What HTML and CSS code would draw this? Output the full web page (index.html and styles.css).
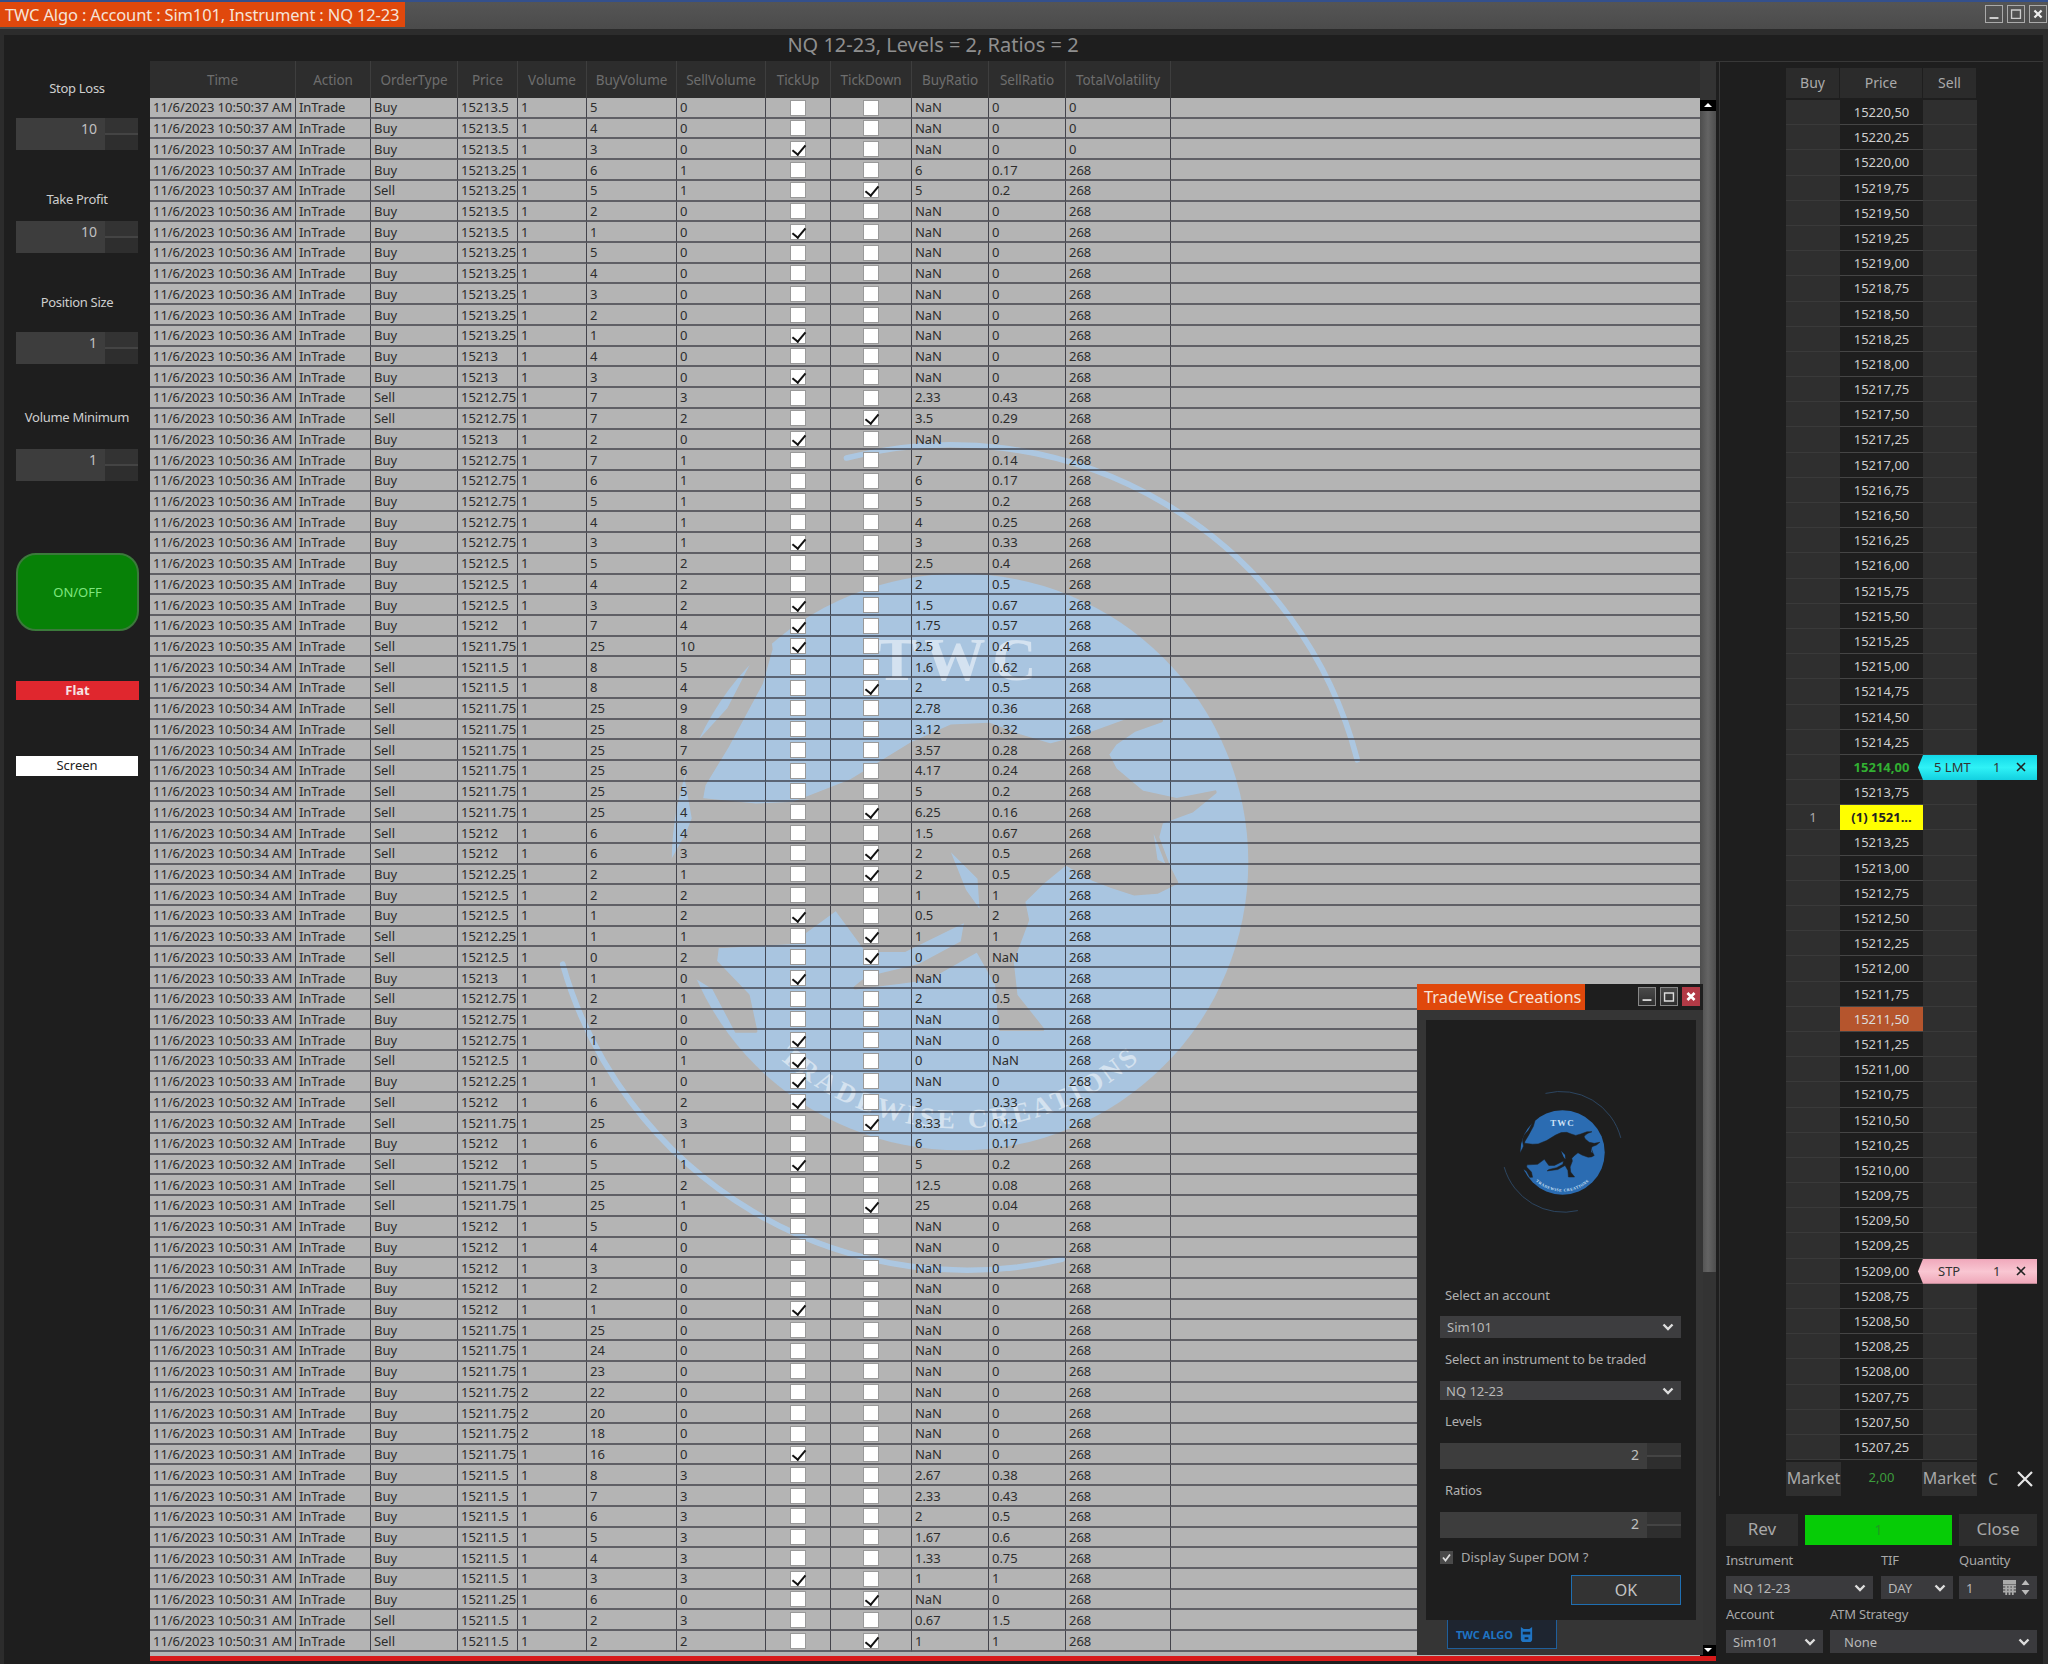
FILE: index.html
```html
<!DOCTYPE html>
<html lang="en">
<head>
<meta charset="utf-8">
<title>TWC Algo</title>
<link rel="stylesheet" href="styles.css">
</head>
<body>
<svg class="defs" width="0" height="0" aria-hidden="true">
  <defs>
    <mask id="bullcut" maskUnits="userSpaceOnUse" x="-200" y="-200" width="400" height="400">
      <rect x="-200" y="-200" width="400" height="400" fill="#fff"/>
      <path fill="#000" stroke="#000" stroke-width="1.500" stroke-linejoin="round" d="M-105.200 -114.500L-91.700 -109.500L-84.100 -100.400L-83.300 -93.800L-87.500 -78.900L-102.700 -50.700L-112.800 -34.100L-114 -27.500L-90 -25L-73.200 -25.800L-47.900 -35.800L-20.900 -52.300L-4 -59.800L12.800 -60.600L26.300 -55.600L39.800 -51.500L55 -55.600L73.500 -62.300L88.700 -62.300L76.900 -58.100L68.400 -52.300L65 -47.400L68.400 -40.700L80.200 -30.800L95.400 -27.500L112.300 -30.800L102.200 -22.500L88.700 -17.500L87 -10.900L92 2.400L95.400 9L87 13.200L76.900 14L66.800 10.700L58.300 7.400L46.500 .7L36.400 9L28 17.300L29.700 25.600L22.900 43.800L24.600 58.800L36.400 73.700L17.900 73.700L16.200 53.800L7.700 38.900L-14.200 51.300L-46.200 55.400L-41.200 51.300L-17.600 45.500L1 35.500L2.700 25.600L-24.300 38.900L-41.200 38.900L-54.600 20.600L-74.900 35.500L-106.900 37.200L-107.800 43.800L-93.400 58.800L-90 74.500L-98.500 74.500L-108.600 55.400L-122 47.200L-132 52L-125 37L-130.500 20.600L-132 9L-120 -12.500L-117.400 -19.200L-120.400 -35.800L-117 -50.700L-101.900 -67.300L-91.700 -87.100L-92.600 -98.800Z"/>
      <path fill="#fff" d="M-4 -4.300L7.700 7.400L8.600 20.600L2.700 12.300ZM85.300 -12.500L90.400 .7L87 -1Z"/>
    </mask>
    <symbol id="twc" viewBox="-200 -200 400 400">
      <circle class="wm-disc" r="127" mask="url(#bullcut)"/>
      <path class="wm-arc" d="M-50 -178A185 185 0 0 1 175 -45"/>
      <path class="wm-arc" d="M-175 45A185 185 0 0 0 45 175"/>
      <text class="wm-title" x="0" y="-80" text-anchor="middle">TWC</text>
      <path id="wmcurve" fill="none" d="M-88 78A118 118 0 0 0 88 78"/>
      <text class="wm-sub"><textPath href="#wmcurve" startOffset="50%" text-anchor="middle">TRADEWISE CREATIONS</textPath></text>
    </symbol>
  </defs>
</svg>
<div class="app">
  <header class="titlebar">
    <div class="title-tag">TWC Algo : Account : Sim101, Instrument : NQ 12-23</div>
    <div class="winbtns">
      <span class="winbtn"><svg viewBox="0 0 18 18"><path d="M4 13.500H14" stroke="#ddd" stroke-width="2"/></svg></span>
      <span class="winbtn"><svg viewBox="0 0 18 18"><path d="M4 4.500H14V14H4Z" fill="none" stroke="#ccc" stroke-width="1.500"/></svg></span>
      <span class="winbtn"><svg viewBox="0 0 18 18"><path d="M5 5L13 13M13 5L5 13" stroke="#eee" stroke-width="2.500"/></svg></span>
    </div>
  </header>
  <main class="main">
    <aside class="side">
      <div class="side-label">Stop Loss</div>
      <div class="spin spin-side"><span class="spin-val">10</span><span class="spin-btns"></span></div>
      <div class="side-label side-label-b">Take Profit</div>
      <div class="spin spin-side spin-near"><span class="spin-val">10</span><span class="spin-btns"></span></div>
      <div class="side-label side-label-b">Position Size</div>
      <div class="spin spin-side"><span class="spin-val">1</span><span class="spin-btns"></span></div>
      <div class="side-label side-label-c">Volume Minimum</div>
      <div class="spin spin-side spin-far"><span class="spin-val">1</span><span class="spin-btns"></span></div>
      <div class="onoff">ON/OFF</div>
      <div class="flat">Flat</div>
      <div class="screen">Screen</div>
    </aside>
    <section class="center">
      <h1 class="grid-title">NQ 12-23, Levels = 2, Ratios = 2</h1>
      <div class="grid-wrap">
        <div class="tablebox">
          <svg class="watermark" aria-hidden="true"><use href="#twc"/></svg>
          <table class="log">
            <colgroup><col class="c1"><col class="c2"><col class="c3"><col class="c4"><col class="c5"><col class="c6"><col class="c7"><col class="c8"><col class="c9"><col class="c10"><col class="c11"><col class="c12"><col></colgroup>
            <thead><tr><th>Time</th><th>Action</th><th>OrderType</th><th>Price</th><th>Volume</th><th>BuyVolume</th><th>SellVolume</th><th>TickUp</th><th>TickDown</th><th>BuyRatio</th><th>SellRatio</th><th>TotalVolatility</th><th></th></tr></thead>
            <tbody>
<tr><td>11/6/2023 10:50:37 AM<td>InTrade<td>Buy<td>15213.5<td>1<td>5<td>0<td class="k"><i></i><td class="k"><i></i><td>NaN<td>0<td>0<td></tr>
<tr><td>11/6/2023 10:50:37 AM<td>InTrade<td>Buy<td>15213.5<td>1<td>4<td>0<td class="k"><i></i><td class="k"><i></i><td>NaN<td>0<td>0<td></tr>
<tr><td>11/6/2023 10:50:37 AM<td>InTrade<td>Buy<td>15213.5<td>1<td>3<td>0<td class="k"><i class="on"></i><td class="k"><i></i><td>NaN<td>0<td>0<td></tr>
<tr><td>11/6/2023 10:50:37 AM<td>InTrade<td>Buy<td>15213.25<td>1<td>6<td>1<td class="k"><i></i><td class="k"><i></i><td>6<td>0.17<td>268<td></tr>
<tr><td>11/6/2023 10:50:37 AM<td>InTrade<td>Sell<td>15213.25<td>1<td>5<td>1<td class="k"><i></i><td class="k"><i class="on"></i><td>5<td>0.2<td>268<td></tr>
<tr><td>11/6/2023 10:50:36 AM<td>InTrade<td>Buy<td>15213.5<td>1<td>2<td>0<td class="k"><i></i><td class="k"><i></i><td>NaN<td>0<td>268<td></tr>
<tr><td>11/6/2023 10:50:36 AM<td>InTrade<td>Buy<td>15213.5<td>1<td>1<td>0<td class="k"><i class="on"></i><td class="k"><i></i><td>NaN<td>0<td>268<td></tr>
<tr><td>11/6/2023 10:50:36 AM<td>InTrade<td>Buy<td>15213.25<td>1<td>5<td>0<td class="k"><i></i><td class="k"><i></i><td>NaN<td>0<td>268<td></tr>
<tr><td>11/6/2023 10:50:36 AM<td>InTrade<td>Buy<td>15213.25<td>1<td>4<td>0<td class="k"><i></i><td class="k"><i></i><td>NaN<td>0<td>268<td></tr>
<tr><td>11/6/2023 10:50:36 AM<td>InTrade<td>Buy<td>15213.25<td>1<td>3<td>0<td class="k"><i></i><td class="k"><i></i><td>NaN<td>0<td>268<td></tr>
<tr><td>11/6/2023 10:50:36 AM<td>InTrade<td>Buy<td>15213.25<td>1<td>2<td>0<td class="k"><i></i><td class="k"><i></i><td>NaN<td>0<td>268<td></tr>
<tr><td>11/6/2023 10:50:36 AM<td>InTrade<td>Buy<td>15213.25<td>1<td>1<td>0<td class="k"><i class="on"></i><td class="k"><i></i><td>NaN<td>0<td>268<td></tr>
<tr><td>11/6/2023 10:50:36 AM<td>InTrade<td>Buy<td>15213<td>1<td>4<td>0<td class="k"><i></i><td class="k"><i></i><td>NaN<td>0<td>268<td></tr>
<tr><td>11/6/2023 10:50:36 AM<td>InTrade<td>Buy<td>15213<td>1<td>3<td>0<td class="k"><i class="on"></i><td class="k"><i></i><td>NaN<td>0<td>268<td></tr>
<tr><td>11/6/2023 10:50:36 AM<td>InTrade<td>Sell<td>15212.75<td>1<td>7<td>3<td class="k"><i></i><td class="k"><i></i><td>2.33<td>0.43<td>268<td></tr>
<tr><td>11/6/2023 10:50:36 AM<td>InTrade<td>Sell<td>15212.75<td>1<td>7<td>2<td class="k"><i></i><td class="k"><i class="on"></i><td>3.5<td>0.29<td>268<td></tr>
<tr><td>11/6/2023 10:50:36 AM<td>InTrade<td>Buy<td>15213<td>1<td>2<td>0<td class="k"><i class="on"></i><td class="k"><i></i><td>NaN<td>0<td>268<td></tr>
<tr><td>11/6/2023 10:50:36 AM<td>InTrade<td>Buy<td>15212.75<td>1<td>7<td>1<td class="k"><i></i><td class="k"><i></i><td>7<td>0.14<td>268<td></tr>
<tr><td>11/6/2023 10:50:36 AM<td>InTrade<td>Buy<td>15212.75<td>1<td>6<td>1<td class="k"><i></i><td class="k"><i></i><td>6<td>0.17<td>268<td></tr>
<tr><td>11/6/2023 10:50:36 AM<td>InTrade<td>Buy<td>15212.75<td>1<td>5<td>1<td class="k"><i></i><td class="k"><i></i><td>5<td>0.2<td>268<td></tr>
<tr><td>11/6/2023 10:50:36 AM<td>InTrade<td>Buy<td>15212.75<td>1<td>4<td>1<td class="k"><i></i><td class="k"><i></i><td>4<td>0.25<td>268<td></tr>
<tr><td>11/6/2023 10:50:36 AM<td>InTrade<td>Buy<td>15212.75<td>1<td>3<td>1<td class="k"><i class="on"></i><td class="k"><i></i><td>3<td>0.33<td>268<td></tr>
<tr><td>11/6/2023 10:50:35 AM<td>InTrade<td>Buy<td>15212.5<td>1<td>5<td>2<td class="k"><i></i><td class="k"><i></i><td>2.5<td>0.4<td>268<td></tr>
<tr><td>11/6/2023 10:50:35 AM<td>InTrade<td>Buy<td>15212.5<td>1<td>4<td>2<td class="k"><i></i><td class="k"><i></i><td>2<td>0.5<td>268<td></tr>
<tr><td>11/6/2023 10:50:35 AM<td>InTrade<td>Buy<td>15212.5<td>1<td>3<td>2<td class="k"><i class="on"></i><td class="k"><i></i><td>1.5<td>0.67<td>268<td></tr>
<tr><td>11/6/2023 10:50:35 AM<td>InTrade<td>Buy<td>15212<td>1<td>7<td>4<td class="k"><i class="on"></i><td class="k"><i></i><td>1.75<td>0.57<td>268<td></tr>
<tr><td>11/6/2023 10:50:35 AM<td>InTrade<td>Sell<td>15211.75<td>1<td>25<td>10<td class="k"><i class="on"></i><td class="k"><i></i><td>2.5<td>0.4<td>268<td></tr>
<tr><td>11/6/2023 10:50:34 AM<td>InTrade<td>Sell<td>15211.5<td>1<td>8<td>5<td class="k"><i></i><td class="k"><i></i><td>1.6<td>0.62<td>268<td></tr>
<tr><td>11/6/2023 10:50:34 AM<td>InTrade<td>Sell<td>15211.5<td>1<td>8<td>4<td class="k"><i></i><td class="k"><i class="on"></i><td>2<td>0.5<td>268<td></tr>
<tr><td>11/6/2023 10:50:34 AM<td>InTrade<td>Sell<td>15211.75<td>1<td>25<td>9<td class="k"><i></i><td class="k"><i></i><td>2.78<td>0.36<td>268<td></tr>
<tr><td>11/6/2023 10:50:34 AM<td>InTrade<td>Sell<td>15211.75<td>1<td>25<td>8<td class="k"><i></i><td class="k"><i></i><td>3.12<td>0.32<td>268<td></tr>
<tr><td>11/6/2023 10:50:34 AM<td>InTrade<td>Sell<td>15211.75<td>1<td>25<td>7<td class="k"><i></i><td class="k"><i></i><td>3.57<td>0.28<td>268<td></tr>
<tr><td>11/6/2023 10:50:34 AM<td>InTrade<td>Sell<td>15211.75<td>1<td>25<td>6<td class="k"><i></i><td class="k"><i></i><td>4.17<td>0.24<td>268<td></tr>
<tr><td>11/6/2023 10:50:34 AM<td>InTrade<td>Sell<td>15211.75<td>1<td>25<td>5<td class="k"><i></i><td class="k"><i></i><td>5<td>0.2<td>268<td></tr>
<tr><td>11/6/2023 10:50:34 AM<td>InTrade<td>Sell<td>15211.75<td>1<td>25<td>4<td class="k"><i></i><td class="k"><i class="on"></i><td>6.25<td>0.16<td>268<td></tr>
<tr><td>11/6/2023 10:50:34 AM<td>InTrade<td>Sell<td>15212<td>1<td>6<td>4<td class="k"><i></i><td class="k"><i></i><td>1.5<td>0.67<td>268<td></tr>
<tr><td>11/6/2023 10:50:34 AM<td>InTrade<td>Sell<td>15212<td>1<td>6<td>3<td class="k"><i></i><td class="k"><i class="on"></i><td>2<td>0.5<td>268<td></tr>
<tr><td>11/6/2023 10:50:34 AM<td>InTrade<td>Buy<td>15212.25<td>1<td>2<td>1<td class="k"><i></i><td class="k"><i class="on"></i><td>2<td>0.5<td>268<td></tr>
<tr><td>11/6/2023 10:50:34 AM<td>InTrade<td>Buy<td>15212.5<td>1<td>2<td>2<td class="k"><i></i><td class="k"><i></i><td>1<td>1<td>268<td></tr>
<tr><td>11/6/2023 10:50:33 AM<td>InTrade<td>Buy<td>15212.5<td>1<td>1<td>2<td class="k"><i class="on"></i><td class="k"><i></i><td>0.5<td>2<td>268<td></tr>
<tr><td>11/6/2023 10:50:33 AM<td>InTrade<td>Sell<td>15212.25<td>1<td>1<td>1<td class="k"><i></i><td class="k"><i class="on"></i><td>1<td>1<td>268<td></tr>
<tr><td>11/6/2023 10:50:33 AM<td>InTrade<td>Sell<td>15212.5<td>1<td>0<td>2<td class="k"><i></i><td class="k"><i class="on"></i><td>0<td>NaN<td>268<td></tr>
<tr><td>11/6/2023 10:50:33 AM<td>InTrade<td>Buy<td>15213<td>1<td>1<td>0<td class="k"><i class="on"></i><td class="k"><i></i><td>NaN<td>0<td>268<td></tr>
<tr><td>11/6/2023 10:50:33 AM<td>InTrade<td>Sell<td>15212.75<td>1<td>2<td>1<td class="k"><i></i><td class="k"><i></i><td>2<td>0.5<td>268<td></tr>
<tr><td>11/6/2023 10:50:33 AM<td>InTrade<td>Buy<td>15212.75<td>1<td>2<td>0<td class="k"><i></i><td class="k"><i></i><td>NaN<td>0<td>268<td></tr>
<tr><td>11/6/2023 10:50:33 AM<td>InTrade<td>Buy<td>15212.75<td>1<td>1<td>0<td class="k"><i class="on"></i><td class="k"><i></i><td>NaN<td>0<td>268<td></tr>
<tr><td>11/6/2023 10:50:33 AM<td>InTrade<td>Sell<td>15212.5<td>1<td>0<td>1<td class="k"><i class="on"></i><td class="k"><i></i><td>0<td>NaN<td>268<td></tr>
<tr><td>11/6/2023 10:50:33 AM<td>InTrade<td>Buy<td>15212.25<td>1<td>1<td>0<td class="k"><i class="on"></i><td class="k"><i></i><td>NaN<td>0<td>268<td></tr>
<tr><td>11/6/2023 10:50:32 AM<td>InTrade<td>Sell<td>15212<td>1<td>6<td>2<td class="k"><i class="on"></i><td class="k"><i></i><td>3<td>0.33<td>268<td></tr>
<tr><td>11/6/2023 10:50:32 AM<td>InTrade<td>Sell<td>15211.75<td>1<td>25<td>3<td class="k"><i></i><td class="k"><i class="on"></i><td>8.33<td>0.12<td>268<td></tr>
<tr><td>11/6/2023 10:50:32 AM<td>InTrade<td>Buy<td>15212<td>1<td>6<td>1<td class="k"><i></i><td class="k"><i></i><td>6<td>0.17<td>268<td></tr>
<tr><td>11/6/2023 10:50:32 AM<td>InTrade<td>Sell<td>15212<td>1<td>5<td>1<td class="k"><i class="on"></i><td class="k"><i></i><td>5<td>0.2<td>268<td></tr>
<tr><td>11/6/2023 10:50:31 AM<td>InTrade<td>Sell<td>15211.75<td>1<td>25<td>2<td class="k"><i></i><td class="k"><i></i><td>12.5<td>0.08<td>268<td></tr>
<tr><td>11/6/2023 10:50:31 AM<td>InTrade<td>Sell<td>15211.75<td>1<td>25<td>1<td class="k"><i></i><td class="k"><i class="on"></i><td>25<td>0.04<td>268<td></tr>
<tr><td>11/6/2023 10:50:31 AM<td>InTrade<td>Buy<td>15212<td>1<td>5<td>0<td class="k"><i></i><td class="k"><i></i><td>NaN<td>0<td>268<td></tr>
<tr><td>11/6/2023 10:50:31 AM<td>InTrade<td>Buy<td>15212<td>1<td>4<td>0<td class="k"><i></i><td class="k"><i></i><td>NaN<td>0<td>268<td></tr>
<tr><td>11/6/2023 10:50:31 AM<td>InTrade<td>Buy<td>15212<td>1<td>3<td>0<td class="k"><i></i><td class="k"><i></i><td>NaN<td>0<td>268<td></tr>
<tr><td>11/6/2023 10:50:31 AM<td>InTrade<td>Buy<td>15212<td>1<td>2<td>0<td class="k"><i></i><td class="k"><i></i><td>NaN<td>0<td>268<td></tr>
<tr><td>11/6/2023 10:50:31 AM<td>InTrade<td>Buy<td>15212<td>1<td>1<td>0<td class="k"><i class="on"></i><td class="k"><i></i><td>NaN<td>0<td>268<td></tr>
<tr><td>11/6/2023 10:50:31 AM<td>InTrade<td>Buy<td>15211.75<td>1<td>25<td>0<td class="k"><i></i><td class="k"><i></i><td>NaN<td>0<td>268<td></tr>
<tr><td>11/6/2023 10:50:31 AM<td>InTrade<td>Buy<td>15211.75<td>1<td>24<td>0<td class="k"><i></i><td class="k"><i></i><td>NaN<td>0<td>268<td></tr>
<tr><td>11/6/2023 10:50:31 AM<td>InTrade<td>Buy<td>15211.75<td>1<td>23<td>0<td class="k"><i></i><td class="k"><i></i><td>NaN<td>0<td>268<td></tr>
<tr><td>11/6/2023 10:50:31 AM<td>InTrade<td>Buy<td>15211.75<td>2<td>22<td>0<td class="k"><i></i><td class="k"><i></i><td>NaN<td>0<td>268<td></tr>
<tr><td>11/6/2023 10:50:31 AM<td>InTrade<td>Buy<td>15211.75<td>2<td>20<td>0<td class="k"><i></i><td class="k"><i></i><td>NaN<td>0<td>268<td></tr>
<tr><td>11/6/2023 10:50:31 AM<td>InTrade<td>Buy<td>15211.75<td>2<td>18<td>0<td class="k"><i></i><td class="k"><i></i><td>NaN<td>0<td>268<td></tr>
<tr><td>11/6/2023 10:50:31 AM<td>InTrade<td>Buy<td>15211.75<td>1<td>16<td>0<td class="k"><i class="on"></i><td class="k"><i></i><td>NaN<td>0<td>268<td></tr>
<tr><td>11/6/2023 10:50:31 AM<td>InTrade<td>Buy<td>15211.5<td>1<td>8<td>3<td class="k"><i></i><td class="k"><i></i><td>2.67<td>0.38<td>268<td></tr>
<tr><td>11/6/2023 10:50:31 AM<td>InTrade<td>Buy<td>15211.5<td>1<td>7<td>3<td class="k"><i></i><td class="k"><i></i><td>2.33<td>0.43<td>268<td></tr>
<tr><td>11/6/2023 10:50:31 AM<td>InTrade<td>Buy<td>15211.5<td>1<td>6<td>3<td class="k"><i></i><td class="k"><i></i><td>2<td>0.5<td>268<td></tr>
<tr><td>11/6/2023 10:50:31 AM<td>InTrade<td>Buy<td>15211.5<td>1<td>5<td>3<td class="k"><i></i><td class="k"><i></i><td>1.67<td>0.6<td>268<td></tr>
<tr><td>11/6/2023 10:50:31 AM<td>InTrade<td>Buy<td>15211.5<td>1<td>4<td>3<td class="k"><i></i><td class="k"><i></i><td>1.33<td>0.75<td>268<td></tr>
<tr><td>11/6/2023 10:50:31 AM<td>InTrade<td>Buy<td>15211.5<td>1<td>3<td>3<td class="k"><i class="on"></i><td class="k"><i></i><td>1<td>1<td>268<td></tr>
<tr><td>11/6/2023 10:50:31 AM<td>InTrade<td>Buy<td>15211.25<td>1<td>6<td>0<td class="k"><i></i><td class="k"><i class="on"></i><td>NaN<td>0<td>268<td></tr>
<tr><td>11/6/2023 10:50:31 AM<td>InTrade<td>Sell<td>15211.5<td>1<td>2<td>3<td class="k"><i></i><td class="k"><i></i><td>0.67<td>1.5<td>268<td></tr>
<tr><td>11/6/2023 10:50:31 AM<td>InTrade<td>Sell<td>15211.5<td>1<td>2<td>2<td class="k"><i></i><td class="k"><i class="on"></i><td>1<td>1<td>268<td></tr>
            </tbody>
          </table>
        </div>
        <div class="vscroll">
          <span class="vs-btn"><span class="vs-up"></span></span>
          <span class="vs-thumb"></span>
          <span class="vs-track"></span>
          <span class="vs-btn"><span class="vs-down"></span></span>
        </div>
      </div>
      <div class="redline"></div>
    </section>
    <section class="dom">
      <div class="ladder">
        <div class="lrow lhead"><span>Buy</span><span>Price</span><span>Sell</span></div>
        <div class="lrow"><span></span><span>15220,50</span><span></span></div>
        <div class="lrow"><span></span><span>15220,25</span><span></span></div>
        <div class="lrow"><span></span><span>15220,00</span><span></span></div>
        <div class="lrow"><span></span><span>15219,75</span><span></span></div>
        <div class="lrow"><span></span><span>15219,50</span><span></span></div>
        <div class="lrow"><span></span><span>15219,25</span><span></span></div>
        <div class="lrow"><span></span><span>15219,00</span><span></span></div>
        <div class="lrow"><span></span><span>15218,75</span><span></span></div>
        <div class="lrow"><span></span><span>15218,50</span><span></span></div>
        <div class="lrow"><span></span><span>15218,25</span><span></span></div>
        <div class="lrow"><span></span><span>15218,00</span><span></span></div>
        <div class="lrow"><span></span><span>15217,75</span><span></span></div>
        <div class="lrow"><span></span><span>15217,50</span><span></span></div>
        <div class="lrow"><span></span><span>15217,25</span><span></span></div>
        <div class="lrow"><span></span><span>15217,00</span><span></span></div>
        <div class="lrow"><span></span><span>15216,75</span><span></span></div>
        <div class="lrow"><span></span><span>15216,50</span><span></span></div>
        <div class="lrow"><span></span><span>15216,25</span><span></span></div>
        <div class="lrow"><span></span><span>15216,00</span><span></span></div>
        <div class="lrow"><span></span><span>15215,75</span><span></span></div>
        <div class="lrow"><span></span><span>15215,50</span><span></span></div>
        <div class="lrow"><span></span><span>15215,25</span><span></span></div>
        <div class="lrow"><span></span><span>15215,00</span><span></span></div>
        <div class="lrow"><span></span><span>15214,75</span><span></span></div>
        <div class="lrow"><span></span><span>15214,50</span><span></span></div>
        <div class="lrow"><span></span><span>15214,25</span><span></span></div>
        <div class="lrow"><span></span><span class="p-last">15214,00</span><span></span>
          <div class="flag flag-lmt"><b>5 LMT</b><b class="fq">1</b><svg viewBox="0 0 12 12"><path d="M2 2L10 10M10 2L2 10" stroke="#222" stroke-width="1.600"/></svg></div>
        </div>
        <div class="lrow"><span></span><span>15213,75</span><span></span></div>
        <div class="lrow"><span>1</span><span class="p-pos">(1) 1521...</span><span></span></div>
        <div class="lrow"><span></span><span>15213,25</span><span></span></div>
        <div class="lrow"><span></span><span>15213,00</span><span></span></div>
        <div class="lrow"><span></span><span>15212,75</span><span></span></div>
        <div class="lrow"><span></span><span>15212,50</span><span></span></div>
        <div class="lrow"><span></span><span>15212,25</span><span></span></div>
        <div class="lrow"><span></span><span>15212,00</span><span></span></div>
        <div class="lrow"><span></span><span>15211,75</span><span></span></div>
        <div class="lrow"><span></span><span class="p-cur">15211,50</span><span></span></div>
        <div class="lrow"><span></span><span>15211,25</span><span></span></div>
        <div class="lrow"><span></span><span>15211,00</span><span></span></div>
        <div class="lrow"><span></span><span>15210,75</span><span></span></div>
        <div class="lrow"><span></span><span>15210,50</span><span></span></div>
        <div class="lrow"><span></span><span>15210,25</span><span></span></div>
        <div class="lrow"><span></span><span>15210,00</span><span></span></div>
        <div class="lrow"><span></span><span>15209,75</span><span></span></div>
        <div class="lrow"><span></span><span>15209,50</span><span></span></div>
        <div class="lrow"><span></span><span>15209,25</span><span></span></div>
        <div class="lrow"><span></span><span>15209,00</span><span></span>
          <div class="flag flag-stp"><b>STP</b><b class="fq">1</b><svg viewBox="0 0 12 12"><path d="M2 2L10 10M10 2L2 10" stroke="#222" stroke-width="1.600"/></svg></div>
        </div>
        <div class="lrow"><span></span><span>15208,75</span><span></span></div>
        <div class="lrow"><span></span><span>15208,50</span><span></span></div>
        <div class="lrow"><span></span><span>15208,25</span><span></span></div>
        <div class="lrow"><span></span><span>15208,00</span><span></span></div>
        <div class="lrow"><span></span><span>15207,75</span><span></span></div>
        <div class="lrow"><span></span><span>15207,50</span><span></span></div>
        <div class="lrow"><span></span><span>15207,25</span><span></span></div>
        <div class="lmarket">
          <span class="m-btn">Market</span><span class="m-val">2,00</span><span class="m-btn">Market</span>
          <span class="m-c">C</span>
          <svg class="m-x" viewBox="0 0 18 18"><path d="M2 2L16 16M16 2L2 16" stroke="#e6e6e6" stroke-width="2.200"/></svg>
        </div>
      </div>
      <div class="orders">
        <div class="o-actions">
          <span class="o-btn o-rev">Rev</span><span class="o-pos">1</span><span class="o-btn o-close">Close</span>
        </div>
        <div class="o-row">
          <div class="o-c1"><div class="o-label">Instrument</div>
            <div class="sel sel-o"><span>NQ 12-23</span><svg class="chev" viewBox="0 0 12 8"><path d="M1.500 1.500L6 6L10.500 1.500" fill="none" stroke="#ddd" stroke-width="2.400"/></svg></div></div>
          <div class="o-c2"><div class="o-label">TIF</div>
            <div class="sel sel-o"><span>DAY</span><svg class="chev" viewBox="0 0 12 8"><path d="M1.500 1.500L6 6L10.500 1.500" fill="none" stroke="#ddd" stroke-width="2.400"/></svg></div></div>
          <div class="o-c3"><div class="o-label">Quantity</div>
            <div class="sel sel-o"><span>1</span>
              <svg class="calc" viewBox="0 0 13 15"><path d="M0 0H13V4H0Z" fill="#aaa"/><path d="M0 5.500H13M0 8.500H13M0 11.500H13M3.200 5V15M6.500 5V15M9.800 5V15" stroke="#aaa" stroke-width="1.800"/></svg>
              <svg class="updown" viewBox="0 0 9 17"><path d="M0.500 6L4.500 1L8.500 6ZM0.500 11L4.500 16L8.500 11Z" fill="#bbb"/></svg>
            </div></div>
        </div>
        <div class="o-row o-row-b">
          <div class="o-c4"><div class="o-label">Account</div>
            <div class="sel sel-o"><span>Sim101</span><svg class="chev" viewBox="0 0 12 8"><path d="M1.500 1.500L6 6L10.500 1.500" fill="none" stroke="#ddd" stroke-width="2.400"/></svg></div></div>
          <div class="o-c5"><div class="o-label">ATM Strategy</div>
            <div class="sel sel-o sel-atm"><span>None</span><svg class="chev" viewBox="0 0 12 8"><path d="M1.500 1.500L6 6L10.500 1.500" fill="none" stroke="#ddd" stroke-width="2.400"/></svg></div></div>
        </div>
      </div>
    </section>
  </main>

  <div class="dialog">
    <div class="dlg-head">
      <div class="dlg-title">TradeWise Creations</div>
      <div class="dlg-btns">
        <span class="dbtn"><svg viewBox="0 0 18 18"><path d="M4 13H14" stroke="#ddd" stroke-width="2"/></svg></span>
        <span class="dbtn"><svg viewBox="0 0 18 18"><path d="M4 5H14V14H4Z" fill="none" stroke="#ddd" stroke-width="1.600"/></svg></span>
        <span class="dbtn dbtn-x"><svg viewBox="0 0 18 18"><path d="M5 5L13 13M13 5L5 13" stroke="#fff" stroke-width="3"/></svg></span>
      </div>
    </div>
    <div class="dlg-body">
      <svg class="dlg-logo" aria-hidden="true"><use href="#twc"/></svg>
      <div class="dlg-label dlg-first">Select an account</div>
      <div class="sel sel-d"><span>Sim101</span><svg class="chev" viewBox="0 0 12 8"><path d="M1.500 1.500L6 6L10.500 1.500" fill="none" stroke="#ddd" stroke-width="2.400"/></svg></div>
      <div class="dlg-label">Select an instrument to be traded</div>
      <div class="sel sel-d sel-short"><span>NQ 12-23</span><svg class="chev" viewBox="0 0 12 8"><path d="M1.500 1.500L6 6L10.500 1.500" fill="none" stroke="#ddd" stroke-width="2.400"/></svg></div>
      <div class="dlg-label">Levels</div>
      <div class="spin spin-dlg"><span class="spin-val">2</span><span class="spin-btns"></span></div>
      <div class="dlg-label">Ratios</div>
      <div class="spin spin-dlg"><span class="spin-val">2</span><span class="spin-btns"></span></div>
      <div class="dlg-check"><span class="chk"><svg viewBox="0 0 13 13"><path d="M3 6.500L5.500 9.500L10 3.500" fill="none" stroke="#ddd" stroke-width="1.800"/></svg></span>Display Super DOM ?</div>
      <div class="dlg-ok">OK</div>
    </div>
    <div class="dlg-tab">
      <span>TWC ALGO</span>
      <svg viewBox="0 0 16 16"><path d="M2 0L5 2H11L14 0V13Q14 16 11 16H5Q2 16 2 13Z" fill="#1f74c4"/><path d="M4 5H12V8H4ZM6 11H10V13H6Z" fill="#14263a"/></svg>
    </div>
  </div>
</div>
</body>
</html>
```

FILE: styles.css
```css
* { box-sizing: border-box; }
html, body { margin: 0; padding: 0; background: #2a2a2a; }
body { font-family: "Noto Sans", "Open Sans", sans-serif; color: #c8c8c8; }
.defs { position: absolute; }

.app { position: relative; width: 2048px; height: 1664px; overflow: hidden; background: #2c2c2c; }

/* window title */
.titlebar { height: 29px; border-top: 2px solid #34508c; background: linear-gradient(#555 0, #4b4b4b 100%); display: flex; justify-content: space-between; }
.title-tag { width: 405px; height: 25px; background: #e0480c; color: #f6e3d8; font-size: 16.500px; line-height: 25px; padding-left: 5px; white-space: nowrap; letter-spacing: -.15px; }
.winbtns { display: flex; gap: 4px; padding: 3px 1px 0 0; }
.winbtn { width: 18px; height: 18px; border: 1px solid #aaa; display: block; }
.winbtn svg { display: block; width: 16px; height: 16px; }

/* main window */
.main { display: flex; margin: 6px 5px 0 4px; height: 1629px; background: #1e1e1e; }

/* left controls */
.side { width: 146px; padding: 43px 0 0 12px; flex: none; }
.side-label { width: 122px; height: 20px; line-height: 20px; text-align: center; font-size: 13px; letter-spacing: -.3px; color: #cfcfcf; white-space: nowrap; }
.side-label-b { margin-top: 39px; }
.side-label-c { margin-top: 43px; }
.spin { display: flex; background: #333; }
.spin-side { width: 122px; height: 32px; margin-top: 20px; }
.spin-near { margin-top: 12px; }
.spin-far { margin-top: 22px; }
.spin-val { display: block; background: #3d3d3d; text-align: right; color: #c0c0c0; font-size: 14px; }
.spin-side .spin-val { width: 89px; padding: 1px 8px 0 0; line-height: 20px; }
.spin-btns { display: block; flex: 1; background: linear-gradient(#333 0 47%, #444 47% 53%, #2e2e2e 53%); }
.onoff { width: 123px; height: 78px; margin-top: 72px; border-radius: 20px; background: #078107; border: 2px solid #3b7a3b; color: #7fe67f; font-size: 13px; text-align: center; line-height: 74px; }
.flat { width: 123px; height: 19px; margin-top: 50px; background: #e0272e; color: #f5e3e3; font-size: 13px; font-weight: 700; line-height: 18px; text-align: center; }
.screen { width: 122px; height: 20px; margin-top: 56px; background: #fff; color: #222; font-size: 13px; line-height: 19px; text-align: center; }

/* center log */
.center { width: 1566px; flex: none; display: flex; flex-direction: column; }
.grid-title { margin: 0; height: 26px; font-size: 20px; font-weight: 400; line-height: 20px; text-align: center; color: #8f8f8f; }
.grid-wrap { display: flex; height: 1595px; }
.tablebox { position: relative; width: 1550px; overflow: hidden; background: #b4b4b4; }
.log { position: relative; z-index: 1; width: 1550px; table-layout: fixed; border-collapse: separate; border-spacing: 0; font-size: 13px; letter-spacing: -.05px; color: #2c2c2c; }
.c1 { width: 146px; } .c2 { width: 75px; } .c3 { width: 87px; } .c4 { width: 60px; } .c5 { width: 69px; } .c6 { width: 90px; }
.c7 { width: 89px; } .c8 { width: 65px; } .c9 { width: 81px; } .c10 { width: 77px; } .c11 { width: 77px; } .c12 { width: 105px; }
.log th { height: 37px; background: #2d2d2d; color: #6e6e6e; font-size: 13.500px; font-weight: 400; border-right: 1px solid #3e3e3e; padding: 0; white-space: nowrap; }
.log th:last-child { border-right: 0; }
.log td { height: 20.720px; padding: 0 0 0 3px; border-bottom: 2px solid rgba(50, 50, 60, .65); border-right: 1px solid rgba(40, 40, 50, .8); line-height: 16px; white-space: nowrap; overflow: hidden; vertical-align: middle; }
.log td:last-child { border-right: 0; }
.log td.k { padding: 0; text-align: center; }
.log i { position: relative; display: inline-block; vertical-align: middle; width: 16px; height: 16px; background: #fff; border: 1px solid #999; margin-top: -2px; }
.log i.on::after { content: ""; position: absolute; left: 4px; top: 0; width: 6px; height: 11px; border: solid #111; border-width: 0 2px 2px 0; transform: rotate(40deg); }
.watermark { position: absolute; left: 356px; top: 347px; width: 908px; height: 908px; pointer-events: none; --disc: #a9c5e0; --arc: rgba(170, 205, 240, .75); --txt: rgba(255, 255, 255, .5); --arcw: 2.500; }
.wm-disc { fill: var(--disc); }
.wm-arc { fill: none; stroke: var(--arc); stroke-width: var(--arcw); stroke-linecap: round; }
.wm-title { fill: var(--txt); font-family: "Liberation Serif", serif; font-weight: 700; font-size: 27px; letter-spacing: 3px; }
.wm-sub { fill: var(--txt); font-family: "Liberation Serif", serif; font-weight: 700; font-size: 12px; letter-spacing: 1.500px; }

.vscroll { width: 16px; padding-top: 39px; background: #333; display: flex; flex-direction: column; }
.vs-btn { height: 11px; background: #000; display: block; flex: none; }
.vs-up, .vs-down { display: block; width: 0; height: 0; margin: 3px auto 0; border-left: 4px solid transparent; border-right: 4px solid transparent; }
.vs-up { border-bottom: 4px solid #fff; }
.vs-down { border-top: 4px solid #fff; }
.vs-thumb { height: 1161px; flex: none; background: linear-gradient(90deg, #4d4d4d, #646464 50%, #4d4d4d); }
.vs-track { flex: 1; background: #333; }
.redline { height: 5px; background: #d71a1a; }

/* DOM */
.dom { width: 327px; margin: 26px 0 0 0; flex: none; border-top: 1px solid #383838; }
.ladder { margin-left: 3px; border-left: 1px solid #383838; padding: 6px 0 0 66px; }
.lrow { position: relative; display: grid; grid-template-columns: 54px 83px 54px; height: 25.200px; font-size: 13px; text-align: center; line-height: 24px; }
.lrow span { display: block; background: #2f2f2f; border-bottom: 1px solid #3a3a3a; color: #aaa; }
.lrow span:nth-child(2) { background: #1e1e1e; color: #cfcfcf; border-bottom-color: #454545; }
.lhead { height: 32px; line-height: 29px; font-size: 14px; }
.lhead span, .lhead span:nth-child(2) { background: #2b2b2b; color: #aaa; border-bottom: 0; border-right: 1px solid #1e1e1e; height: 30px; }
.lrow span.p-last { color: #32b032; font-weight: 700; }
.lrow span.p-pos { background: #ff0; color: #222; font-weight: 700; border-bottom: 0; }
.lrow span.p-cur { background: #b5552d; color: #ddd; }
.flag { position: absolute; left: 132px; top: 0; width: 119px; height: 25px; display: flex; align-items: center; clip-path: polygon(0 50%, 5px 0, 100% 0, 100% 100%, 5px 100%); font-size: 13px; color: #333; line-height: 24px; }
.flag b { font-weight: 400; margin-left: 16px; width: 50px; text-align: left; white-space: nowrap; }
.flag-stp b:first-child { margin-left: 20px; width: 46px; }
.flag b.fq { margin-left: 9px; width: 22px; }
.flag svg { width: 12px; height: 12px; flex: none; }
.flag-lmt { background: linear-gradient(#13d8e8, #2ff2f6 50%, #13d0e0); }
.flag-stp { background: linear-gradient(#f0a8bb, #f9c6d2 50%, #eea6b8); }
.lmarket { display: flex; align-items: center; height: 35px; margin-top: 1px; }
.m-btn { width: 55px; height: 34px; background: #2f2f2f; color: #a8a8a8; font-size: 16px; line-height: 33px; text-align: center; flex: none; white-space: nowrap; }
.m-val { width: 81px; height: 34px; background: #1e1e1e; color: #3c9c3c; font-size: 13px; line-height: 30px; text-align: center; flex: none; }
.m-c { margin-left: 11px; font-size: 16px; color: #9a9a9a; width: 28px; }
.m-x { width: 18px; height: 18px; }
.orders { padding: 18px 0 0 10px; }
.o-actions { display: flex; gap: 7px; height: 32px; }
.o-btn { display: block; background: #2d2d2d; color: #a8a8a8; font-size: 17px; text-align: center; line-height: 30px; }
.o-rev { width: 72px; }
.o-close { width: 78px; }
.o-pos { display: block; width: 147px; height: 30px; margin-top: 1px; background: #06cc06; color: #209c20; font-size: 14px; text-align: center; line-height: 30px; }
.o-row { display: flex; }
.o-label { height: 20px; margin-top: 4px; line-height: 20px; font-size: 13px; letter-spacing: -.2px; color: #a8a8a8; white-space: nowrap; }
.o-row-b .o-label { margin-top: 5px; }
.o-c1 { width: 147px; margin-right: 8px; }
.o-c2 { width: 72px; margin-right: 6px; }
.o-c3 { width: 78px; }
.o-c4 { width: 97px; margin-right: 7px; }
.o-c5 { width: 207px; }
.sel { display: flex; align-items: center; background: #3a3a3d; color: #b8b8b8; font-size: 13px; }
.sel span { flex: 1; white-space: nowrap; }
.chev { width: 12px; height: 8px; flex: none; }
.sel-o { height: 23px; margin-top: 6px; padding: 0 7px; }
.sel-atm { padding-left: 14px; }
.calc { width: 13px; height: 15px; flex: none; margin-right: 5px; }
.updown { width: 9px; height: 17px; flex: none; }

/* dialog */
.dialog { position: absolute; left: 1417px; top: 984px; z-index: 5; width: 286px; height: 671px; background: #353535; }
.dlg-head { height: 26px; background: #1e1e1e; display: flex; justify-content: space-between; }
.dlg-title { width: 168px; height: 26px; background: #e0480c; color: #f6e3d8; font-size: 16.400px; line-height: 25px; padding-left: 7px; white-space: nowrap; }
.dlg-btns { display: flex; gap: 4px; padding: 3px 3px 0 0; }
.dbtn { display: block; width: 18px; height: 19px; border: 1px solid #888; background: linear-gradient(#4a4a4a, #2e2e2e); }
.dbtn svg { display: block; width: 16px; height: 17px; }
.dbtn-x { background: #b23a46; border-color: #b23a46; }
.dlg-body { width: 270px; height: 600px; margin: 10px 0 0 9px; padding: 0 15px 0 14px; background: #1e1e1e; }
.dlg-logo { display: block; width: 133px; height: 133px; margin: 0 0 0 56px; position: relative; top: 66px; --disc: #2b6cb2; --arc: #2f4d6e; --txt: #cfe3f7; --arcw: 2.500; }
.dlg-label { height: 20px; line-height: 20px; padding-left: 5px; margin-top: 11px; font-size: 13px; letter-spacing: -.1px; color: #b0b0b0; white-space: nowrap; }
.dlg-first { margin-top: 132px; }
.sel-d { height: 22px; margin-top: 11px; padding: 0 7px 0 7px; background: #3d3d3f; }
.sel-short { height: 19px; margin-top: 12px; padding-left: 6px; }
.spin-dlg { height: 26px; margin-top: 12px; }
.spin-dlg .spin-val { width: 207px; padding-right: 8px; line-height: 24px; }
.dlg-check { display: flex; align-items: center; height: 20px; margin-top: 9px; font-size: 13px; color: #a8a8a8; gap: 8px; }
.chk { display: block; width: 13px; height: 13px; background: #4a4a4a; }
.chk svg { display: block; width: 13px; height: 13px; }
.dlg-ok { width: 110px; height: 30px; margin: 8px 0 0 131px; border: 1px solid #1f6fb2; background: #333; color: #c4c4c4; font-size: 16px; line-height: 28px; text-align: center; }
.dlg-tab { display: flex; align-items: center; gap: 6px; width: 110px; height: 29px; margin-left: 30px; padding-left: 8px; background: #1e2530; border: 1px solid #1f5f9c; border-top: 0; color: #1f74c4; font-size: 11px; font-weight: 700; white-space: nowrap; }
.dlg-tab svg { width: 15px; height: 15px; flex: none; }
```
